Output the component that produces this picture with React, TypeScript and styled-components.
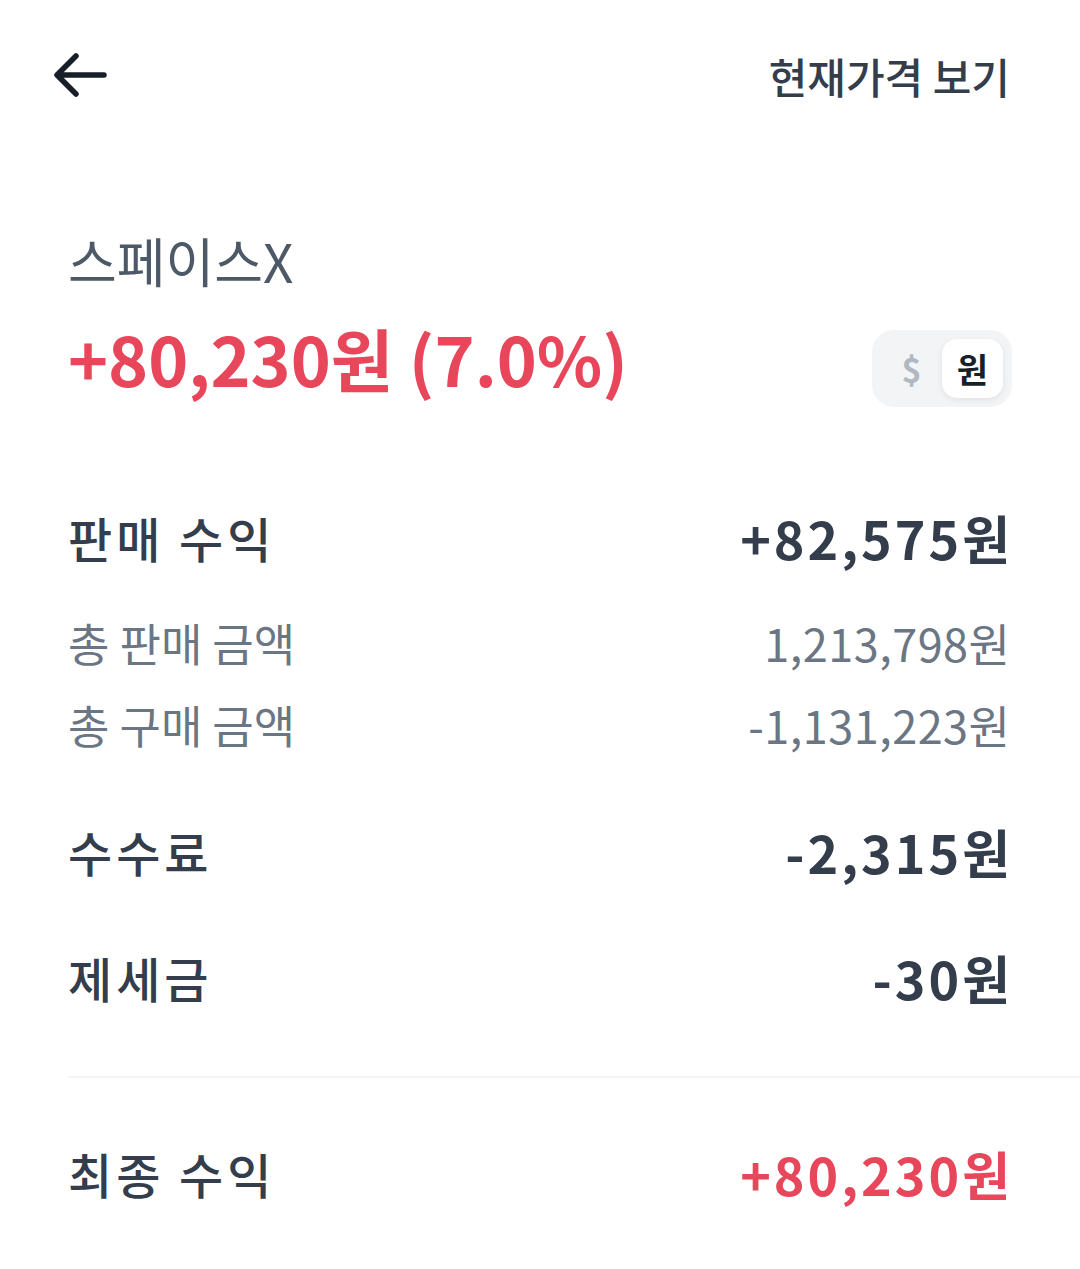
import styled, { createGlobalStyle } from 'styled-components';

const GlobalStyle = createGlobalStyle`
  * { box-sizing: border-box; }
  body {
    margin: 0;
    background: #ffffff;
    font-family: "Noto Sans CJK KR", "Noto Sans", sans-serif;
  }
`;

const Page = styled.div`
  width: 1080px;
  min-height: 1269px;
  background: #fff;
`;
const Header = styled.header`
  display: flex;
  height: 150px;
  padding: 0 70px 0 52px;
  justify-content: space-between;
  align-items: center;
`;
const BackButton = styled.button`
  display: flex;
  align-items: center;
  justify-content: center;
  width: 58px;
  height: 58px;
  padding: 0;
  border: none;
  background: none;
`;
const HeaderLink = styled.span`
  color: #333d4b;
  font-size: 42px;
  font-weight: 500;
  letter-spacing: 0;
`;
const Content = styled.main`
  padding-left: 68px;
`;
const Inner = styled.div`
  padding-right: 70px;
`;
const StockName = styled.h1`
  margin: 80px 0 0;
  height: 60px;
  line-height: 60px;
  color: #4e5968;
  font-size: 53px;
  font-weight: 400;
  letter-spacing: 0;
`;
const SummaryRow = styled.div`
  display: flex;
  margin-top: 28px;
  justify-content: space-between;
  align-items: flex-start;
`;
const Profit = styled.div`
  height: 80px;
  line-height: 80px;
  color: #e8465a;
  font-size: 68px;
  font-weight: 700;
  letter-spacing: 0;
`;
const Toggle = styled.div`
  display: flex;
  margin-top: 12px;
  margin-right: -2px;
  width: 140px;
  height: 77px;
  padding: 9px;
  border-radius: 22px;
  background: #f2f4f6;
  align-items: center;
`;
const ToggleOption = styled.span<{ active?: boolean }>`
  display: flex;
  width: 61px;
  height: 59px;
  align-items: center;
  justify-content: center;
  border-radius: 15px;
  font-size: 34px;
  font-weight: 700;
  color: ${(p) => (p.active ? '#191f28' : '#b0b8c1')};
  background: ${(p) => (p.active ? '#ffffff' : 'transparent')};
  box-shadow: ${(p) => (p.active ? '0 2px 6px rgba(0,0,0,0.08)' : 'none')};
`;
const Row = styled.div<{ gap: number; h: number }>`
  display: flex;
  height: ${(p) => p.h}px;
  margin-top: ${(p) => p.gap}px;
  justify-content: space-between;
  align-items: center;
`;
const Label = styled.span<{ sub?: boolean }>`
  color: ${(p) => (p.sub ? '#6b7684' : '#333d4b')};
  font-size: ${(p) => (p.sub ? 45 : 48)}px;
  font-weight: ${(p) => (p.sub ? 400 : 500)};
  letter-spacing: ${(p) => (p.sub ? 0 : 4)}px;
`;
const Value = styled.span<{ sub?: boolean; red?: boolean }>`
  color: ${(p) => (p.red ? '#e8465a' : p.sub ? '#6b7684' : '#333d4b')};
  font-size: ${(p) => (p.sub ? 45 : 52)}px;
  font-weight: ${(p) => (p.sub ? 400 : 700)};
  letter-spacing: ${(p) => (p.sub ? 0.5 : 3)}px;
  margin-right: ${(p) => (p.sub ? -0.5 : -3)}px;
`;
const Divider = styled.hr`
  margin: 59px 0 0;
  height: 2px;
  border: none;
  background: #f2f4f6;
`;

function App() {
  return (
    <>
      <GlobalStyle />
      <Page>
        <Header>
          <BackButton aria-label="뒤로">
            <svg width="58" height="58" viewBox="0 0 58 58" fill="none">
              <path
                d="M52 29H6M24 10L5 29l19 19"
                stroke="#191f28"
                strokeWidth="5.5"
                strokeLinecap="round"
                strokeLinejoin="round"
              />
            </svg>
          </BackButton>
          <HeaderLink>현재가격 보기</HeaderLink>
        </Header>

        <Content>
          <Inner>
            <StockName>스페이스X</StockName>
            <SummaryRow>
              <Profit>+80,230원 (7.0%)</Profit>
              <Toggle>
                <ToggleOption>$</ToggleOption>
                <ToggleOption active>원</ToggleOption>
              </Toggle>
            </SummaryRow>

            <Row gap={90} h={80}>
              <Label>판매 수익</Label>
              <Value>+82,575원</Value>
            </Row>
            <Row gap={24} h={82}>
              <Label sub>총 판매 금액</Label>
              <Value sub>1,213,798원</Value>
            </Row>
            <Row gap={0} h={82}>
              <Label sub>총 구매 금액</Label>
              <Value sub>-1,131,223원</Value>
            </Row>
            <Row gap={46} h={80}>
              <Label>수수료</Label>
              <Value>-2,315원</Value>
            </Row>
            <Row gap={46} h={80}>
              <Label>제세금</Label>
              <Value>-30원</Value>
            </Row>
          </Inner>

          <Divider />

          <Inner>
            <Row gap={55} h={80}>
              <Label>최종 수익</Label>
              <Value red>+80,230원</Value>
            </Row>
          </Inner>
        </Content>
      </Page>
    </>
  );
}

export default App;
